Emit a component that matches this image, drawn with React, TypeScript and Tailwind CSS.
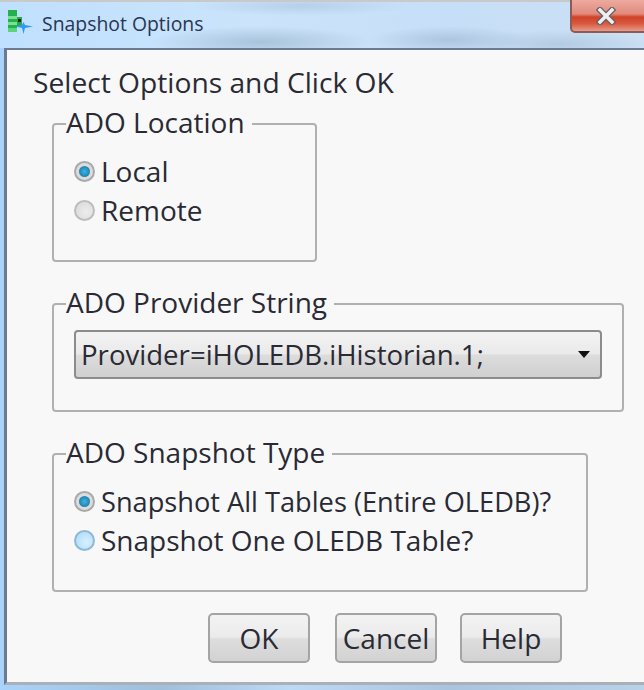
const font = "font-['Open_Sans','Noto_Sans',sans-serif]";

function Radio({ checked, hover, label, size = "text-[28px]" }: { checked?: boolean; hover?: boolean; label: string; size?: string }) {
  return (
    <div className="flex items-center h-[39px]">
      <span
        className={
          "w-[21px] h-[21px] rounded-full border-2 flex items-center justify-center shrink-0 " +
          (hover
            ? "border-[#8fb8d6] bg-[radial-gradient(circle_at_60%_60%,#d8f0ff,#a8d8fa)]"
            : checked
              ? "border-[#a9a9a9] bg-[#dcdcdc]"
              : "border-[#bdbdbd] bg-[radial-gradient(circle_at_60%_60%,#ececec,#d8d8d8)]")
        }
      >
        {checked && <span className="w-[11px] h-[11px] rounded-full bg-[radial-gradient(circle_at_50%_50%,#3fb4de,#0f6f9e)]" />}
      </span>
      <span className={"ml-[6px] leading-[39px] text-[#2a2a35] whitespace-nowrap " + size}>{label}</span>
    </div>
  );
}

function Group({ title, className, children }: { title: string; className: string; children: React.ReactNode }) {
  return (
    <fieldset className={"border-2 border-[#b0b0b0] rounded-[4px] px-[20px] min-w-0 " + className}>
      <legend className="ml-[-8px] pl-0 pr-[7px] -translate-y-[2px] text-[28px] leading-[36px] text-[#2a2a35] whitespace-nowrap">{title}</legend>
      {children}
    </fieldset>
  );
}

function Btn({ label, className = "" }: { label: string; className?: string }) {
  return (
    <button className={"w-[102px] h-[50px] rounded-[5px] border-2 border-[#a4a4a4] bg-[linear-gradient(#f3f3f3_0%,#ebebeb_48%,#dddddd_52%,#d2d2d2_100%)] text-[28px] leading-none text-[#2a2a35] " + className}>
      {label}
    </button>
  );
}

export default function App() {
  return (
    <div className={"w-[644px] h-[690px] overflow-hidden flex flex-col bg-[linear-gradient(90deg,#a9d3fb_0%,#9fbfdc_25%,#bcd9f6_45%,#a9c4de_70%,#b8d2ea_100%)] " + font}>
      {/* title bar */}
      <div className="h-[48px] shrink-0 flex items-start relative border-t-[2px] border-[#c9c9c9] bg-[radial-gradient(ellipse_110px_16px_at_260px_40px,#a9c3dc,transparent),radial-gradient(ellipse_80px_14px_at_450px_38px,#adc6df,transparent),radial-gradient(ellipse_90px_14px_at_560px_42px,#b4cbe2,transparent),radial-gradient(ellipse_110px_10px_at_300px_4px,#b7d0ea,transparent),linear-gradient(90deg,#bfe0ff_0%,#cbe4fb_40%,#c6def7_70%,#cbe0f5_100%)]">
        <svg width="30" height="30" viewBox="0 0 30 30" className="ml-[6px] mt-[6px] shrink-0">
          <rect x="2" y="2" width="9" height="6" fill="#22b14c" />
          <rect x="2" y="8" width="9" height="3" fill="#7be08f" />
          <rect x="2" y="11" width="9" height="3" fill="#22b14c" />
          <rect x="2" y="14" width="9" height="3" fill="#7be08f" />
          <rect x="2" y="17" width="9" height="3" fill="#22b14c" />
          <rect x="2" y="20" width="9" height="4" fill="#5ad678" />
          <rect x="11" y="9" width="5" height="9" fill="#2aa64e" />
          <rect x="12" y="11" width="3" height="3" fill="#222222" />
          <path d="M16 17 17.5 14 19 17 27 18.500 19 20 17.500 26 16 20 9 18.500z" fill="#2f9bef" />
        </svg>
        <span className="ml-[6px] mt-[9px] text-[19.4px] leading-[26px] text-[#2a3550] whitespace-nowrap">Snapshot Options</span>
        <div className="absolute right-[-6px] top-[-2px] w-[80px] h-[33px] rounded-b-[5px] border-2 border-t-0 border-[#8b5b55] bg-[linear-gradient(#eeaa9f_0%,#e08a7c_45%,#cf4226_55%,#d8573d_75%,#e79a88_100%)] flex items-center justify-center">
          <svg width="20" height="18" viewBox="0 0 20 18" className="mr-[8px]">
            <path d="M4 3 16 15M16 3 4 15" stroke="#5e5e66" strokeWidth="6" strokeLinecap="square" />
            <path d="M4 3 16 15M16 3 4 15" stroke="#efefef" strokeWidth="3.500" strokeLinecap="square" />
          </svg>
        </div>
      </div>
      {/* client area */}
      <div className="ml-[4px] h-[637px] shrink-0 border-l-[3px] border-t-[2px] border-b-[3px] border-[#6b7a90] border-b-[#a9b0b8] bg-[#f8f8f8] pl-[26px] pt-[14px]">
        <div className="text-[28.2px] leading-[36px] text-[#2a2a35] whitespace-nowrap">Select Options and Click OK</div>
        <div className="pl-[19px] mt-[6px] flex flex-col items-start">
          <Group title="ADO Location" className="w-[265px] h-[156px]">
            <div className="mt-[10px]">
              <Radio checked label="Local" />
              <Radio label="Remote" />
            </div>
          </Group>
          <Group title="ADO Provider String" className="w-[572px] h-[126px] mt-[24px]">
            <div className="mt-[8px] h-[49px] w-[528px] rounded-[4px] border-2 border-[#8c8c8c] bg-[linear-gradient(#f3f3f3_0%,#eaeaea_48%,#dcdcdc_52%,#d0d0d0_100%)] flex items-center pl-[5px] pr-[10px]">
              <span className="text-[27.6px] leading-none pt-[1px] text-[#2a2a35] whitespace-nowrap flex-1">Provider=iHOLEDB.iHistorian.1;</span>
              <span className="w-0 h-0 border-x-[6px] border-x-transparent border-t-[7px] border-t-[#111111]" />
            </div>
          </Group>
          <Group title="ADO Snapshot Type" className="w-[536px] h-[156px] mt-[24px]">
            <div className="mt-[10px]">
              <Radio checked size="text-[27.2px]" label="Snapshot All Tables (Entire OLEDB)?" />
              <Radio hover label="Snapshot One OLEDB Table?" />
            </div>
          </Group>
          <div className="flex mt-[21px] ml-[156px]">
            <Btn label="OK" />
            <Btn label="Cancel" className="ml-[25px]" />
            <Btn label="Help" className="ml-[23px]" />
          </div>
        </div>
      </div>
    </div>
  );
}
